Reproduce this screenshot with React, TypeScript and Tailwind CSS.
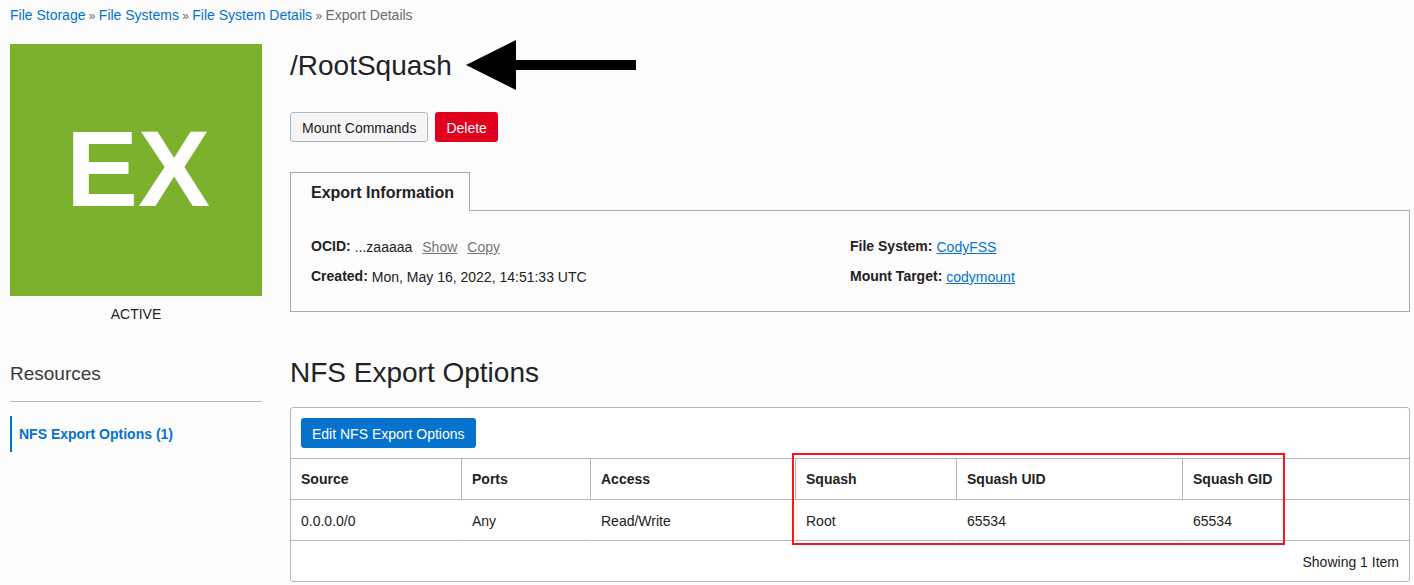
import React from "react";

const breadcrumbs = ["File Storage", "File Systems", "File System Details"];

const columns = [
  { label: "Source", width: "w-[170px]" },
  { label: "Ports", width: "w-[129px]" },
  { label: "Access", width: "w-[205px]" },
  { label: "Squash", width: "w-[161px]" },
  { label: "Squash UID", width: "w-[226px]" },
  { label: "Squash GID", width: "" },
];

const rows = [["0.0.0.0/0", "Any", "Read/Write", "Root", "65534", "65534"]];

function Breadcrumbs() {
  return (
    <nav aria-label="Breadcrumb" className="py-[5px] text-[#6b6b6b]">
      {breadcrumbs.map((crumb) => (
        <React.Fragment key={crumb}>
          <a href="#" className="text-[#0572ce] hover:underline">
            {crumb}
          </a>
          <span className="text-xs">{" » "}</span>
        </React.Fragment>
      ))}
      <span>Export Details</span>
    </nav>
  );
}

function Sidebar() {
  return (
    <aside className="mt-1 w-[252px] shrink-0">
      <div className="flex h-[252px] items-center justify-center bg-[#7bb12c] pb-0.5 pl-1 text-[108px] leading-none font-bold text-white">
        EX
      </div>
      <p className="mt-2 text-center">ACTIVE</p>

      <h2 className="mt-[37px] border-b border-[#b5b5c5] pb-3.5 text-[19px] leading-[26px] text-[#3a3a3a]">
        Resources
      </h2>
      <a
        href="#nfs-export-options"
        className="mt-3.5 flex h-9 items-center border-l-2 border-[#0572ce] pl-[7px] font-bold text-[#0572ce]"
      >
        NFS Export Options (1)
      </a>
    </aside>
  );
}

function Field({ label, children }: { label: string; children: React.ReactNode }) {
  return (
    <div className="flex h-[30px] items-center gap-1">
      <dt className="font-bold">{label}:</dt>
      <dd className="flex gap-2.5 pt-0.5">{children}</dd>
    </div>
  );
}

function ExportInformation() {
  return (
    <section className="mt-[30px]">
      <div role="tablist" className="flex">
        <button
          role="tab"
          aria-selected="true"
          className="relative z-10 -mb-px h-[39px] border border-b-0 border-[#aaaaaa] bg-[#fcfcfc] pt-0.5 pr-[15px] pl-5 text-base font-bold"
        >
          Export Information
        </button>
      </div>
      <div role="tabpanel" className="grid grid-cols-2 border border-[#aaaaaa] px-5 pt-5 pb-5">
        <dl>
          <Field label="OCID">
            <span>...zaaaaa</span>
            <a href="#" className="text-[#757575] underline">
              Show
            </a>
            <a href="#" className="text-[#757575] underline">
              Copy
            </a>
          </Field>
          <Field label="Created">Mon, May 16, 2022, 14:51:33 UTC</Field>
        </dl>
        <dl>
          <Field label="File System">
            <a href="#" className="text-[#0572ce] underline">
              CodyFSS
            </a>
          </Field>
          <Field label="Mount Target">
            <a href="#" className="text-[#0572ce] underline">
              codymount
            </a>
          </Field>
        </dl>
      </div>
    </section>
  );
}

function ExportOptions() {
  return (
    <section id="nfs-export-options" className="mt-[41px]">
      <h2 className="text-[28px] leading-10">NFS Export Options</h2>
      <div className="mt-3.5 rounded-[3px] border border-[#b0b7c3] bg-white">
        <div className="p-2.5">
          <button className="block h-[30px] rounded-[3px] bg-[#0572ce] px-[11px] pt-0.5 text-white">
            Edit NFS Export Options
          </button>
        </div>

        <div className="relative">
          <table className="w-full table-fixed border-separate border-spacing-0 text-left">
            <thead>
              <tr>
                {columns.map((column) => (
                  <th
                    key={column.label}
                    scope="col"
                    className={`h-[42px] border-y border-l border-[#b0b7c3] px-2.5 py-0 font-bold first:border-l-0 ${column.width}`}
                  >
                    {column.label}
                  </th>
                ))}
              </tr>
            </thead>
            <tbody>
              {rows.map((row, i) => (
                <tr key={i}>
                  {row.map((cell, j) => (
                    <td
                      key={j}
                      className="h-[41px] border-b border-l border-b-[#b0b7c3] border-l-transparent px-2.5 pt-0.5 pb-0 first:border-l-0"
                    >
                      {cell}
                    </td>
                  ))}
                </tr>
              ))}
            </tbody>
          </table>
          {/* Highlight around the squash columns */}
          <div className="pointer-events-none absolute -top-[5px] left-[501px] h-[92px] w-[493px] border-2 border-[#fb1418]" />
        </div>

        <p className="px-2.5 pt-[11px] pb-[9px] text-right">Showing 1 Item</p>
      </div>
    </section>
  );
}

export default function App() {
  return (
    <div className="min-h-screen bg-[#fcfcfc] pr-1 pl-2.5 font-['Liberation_Sans',Arial,sans-serif] text-sm leading-5 text-[#222222]">
      <Breadcrumbs />
      <div className="mt-2.5 flex gap-7">
        <Sidebar />
        <main className="min-w-0 flex-1">
          <div className="flex items-center gap-3.5">
            <h1 className="pt-0.5 text-[28px] leading-10">/RootSquash</h1>
            <svg width="170" height="50" viewBox="0 0 170 50" aria-hidden="true">
              <path d="M0 25 50 0v20h120v10H50v20z" fill="#000" />
            </svg>
          </div>
          <div className="mt-[22px] flex gap-[7px]">
            <button className="h-[30px] rounded-[3px] border border-[#b0b7c3] bg-[#f5f5f5] px-[11px] pt-0.5">
              Mount Commands
            </button>
            <button className="h-[30px] rounded-[3px] bg-[#e2001f] px-[11px] pt-0.5 text-white">
              Delete
            </button>
          </div>
          <ExportInformation />
          <ExportOptions />
        </main>
      </div>
    </div>
  );
}
